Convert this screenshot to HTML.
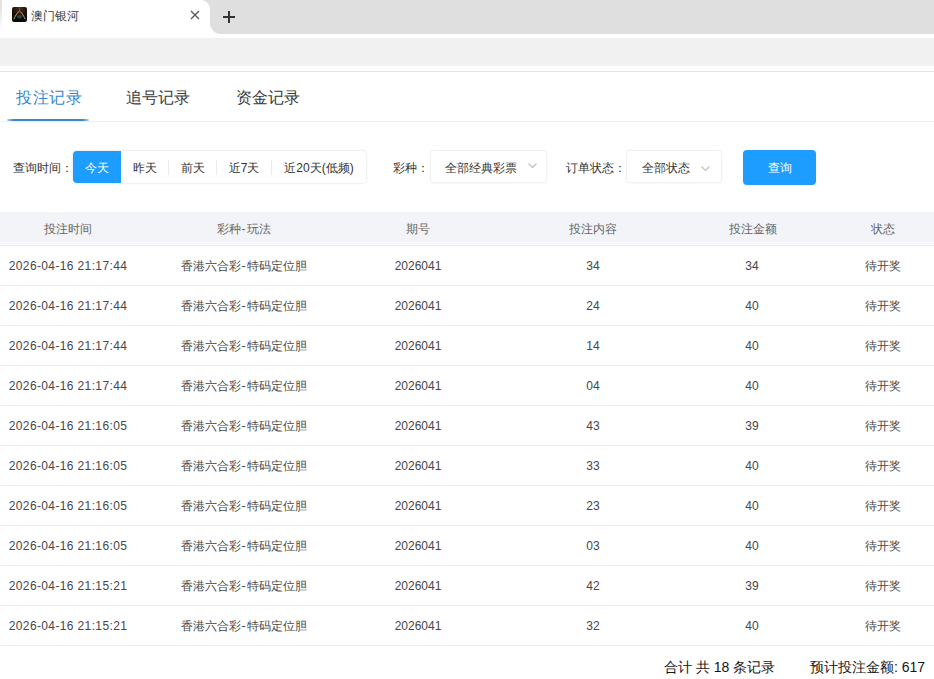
<!DOCTYPE html>
<html><head><meta charset="utf-8">
<style>
*{margin:0;padding:0;box-sizing:border-box}
html,body{width:934px;height:679px;overflow:hidden;background:#fff;font-family:"Liberation Sans",sans-serif;color:#333}
.abs{position:absolute}
#tabbar{position:absolute;left:0;top:0;width:934px;height:34px;background:#dfdfdf}
#tab{position:absolute;left:0;top:0;width:210px;height:38px;background:#fff;border-radius:0 9px 0 0}
#tabl{position:absolute;left:0;top:0;width:2px;height:30px;background:linear-gradient(#e2e2e2,#e8e8e8 40%,#fff)}
#tabcorner{position:absolute;left:210px;top:22px;width:12px;height:16px;background:#fff}
#tabcorner2{position:absolute;left:210px;top:0;width:22px;height:34px;background:#dfdfdf;border-bottom-left-radius:11px}
#favicon{position:absolute;left:11.5px;top:7.3px;width:15px;height:15px}
#tabtitle{position:absolute;left:31px;top:8px;font-size:12px;line-height:16px;color:#3c3c3c}
#toolbar{position:absolute;left:0;top:38px;width:934px;height:28px;background:#f1f1f1}
#tline{position:absolute;left:0;top:71px;width:934px;height:1px;background:#e3e3e3}
.navtab{position:absolute;top:87px;font-size:16px;line-height:22px;color:#3a3a3a}
#navline{position:absolute;left:0;top:121px;width:934px;height:1px;background:#f0f0f0}
#navul{position:absolute;left:6.5px;top:119px;width:82.5px;height:2px;background:linear-gradient(90deg,rgba(58,136,200,0.35),#3a88c8 8%,#3a88c8 92%,rgba(58,136,200,0.35));border-radius:1px}
.lbl{position:absolute;top:160px;font-size:12px;line-height:16px;color:#333}
#grp{position:absolute;left:72px;top:150px;width:295px;height:34px;border:1px solid #f1f1f1;border-radius:5px;box-shadow:0 0 1px 1px rgba(0,0,0,0.02)}
.gb{position:absolute;top:0;height:32px;font-size:12px;line-height:34px;color:#333;text-align:center}
.sep{position:absolute;top:9px;width:1px;height:15px;background:#ebebeb}
#today{left:0;width:48px;background:#1c9dff;color:#fff;border-radius:4px 0 0 4px;top:0;left:0;width:47.5px;height:32px;line-height:34px}
.sel{position:absolute;top:150px;height:33px;border:1px solid #f1f1f1;border-radius:3px;box-shadow:0 0 1px 1px rgba(0,0,0,0.02)}
.seltxt{position:absolute;top:9px;font-size:12px;line-height:16px;color:#333}
.chev{position:absolute;width:9px;height:5px}
#qbtn{position:absolute;left:743px;top:150px;width:73px;height:35px;background:#1c9dff;border-radius:4px;color:#fff;font-size:12px;line-height:36px;text-align:center}
#thead{position:absolute;left:0;top:212px;width:934px;height:34px;background:linear-gradient(#f3f4f7 0,#f3f4f7 30px,#f8f8fb 30px);border-bottom:1px solid #ebebf1}
.th{position:absolute;top:9px;width:200px;text-align:center;font-size:12px;line-height:16px;color:#666}
.row{position:absolute;left:0;width:934px;height:40px;border-bottom:1px solid #efefef}
.td{position:absolute;top:12px;width:240px;text-align:center;font-size:12px;line-height:16px;color:#474747}
.c1{letter-spacing:0.37px}
.c1{left:-52px}.c2{left:123.5px}.c3{left:298px}.c4{left:473px}.c5{left:632px}.c6{left:763px}
.hy{margin:0 1px}
.foot{position:absolute;top:658px;font-size:14px;line-height:18px;color:#151515}
</style></head><body>
<div id="tabbar"></div>
<div id="tabcorner"></div>
<div id="tabcorner2"></div>
<div id="tab"></div><div id="tabl"></div>
<div id="favicon"><svg width="15" height="15" viewBox="0 0 15 15"><defs><radialGradient id="fg" cx="0.5" cy="0.1" r="0.8"><stop offset="0" stop-color="#4a2a14"/><stop offset="0.6" stop-color="#1c120a"/><stop offset="1" stop-color="#0e0a07"/></radialGradient></defs><rect width="15" height="15" rx="2" fill="url(#fg)"/><path d="M7.5 0V3.5" stroke="#7a4526" stroke-width="1.2"/><ellipse cx="7.5" cy="9.8" rx="2.6" ry="1.8" fill="#1f4753"/><path d="M1.8 12.2C3.8 8 6 4.6 7.5 4.2C9 4.6 11.2 8 13.2 12.2" stroke="#bba67c" stroke-width="1" fill="none"/></svg></div>
<div id="tabtitle">澳门银河</div>
<svg class="abs" style="left:190px;top:10px" width="10" height="10" viewBox="0 0 10 10"><path d="M1 1L9 9M9 1L1 9" stroke="#555" stroke-width="1.3"/></svg>
<svg class="abs" style="left:222px;top:10px" width="14" height="14" viewBox="0 0 14 14"><path d="M7 1V13M1 7H13" stroke="#333" stroke-width="2"/></svg>
<div id="toolbar"></div>
<div id="tline"></div>

<div class="navtab" style="left:16px;color:#3587d0;letter-spacing:0.6px">投注记录</div>
<div class="navtab" style="left:126px">追号记录</div>
<div class="navtab" style="left:236px">资金记录</div>
<div id="navline"></div>
<div id="navul"></div>

<div class="lbl" style="left:13px">查询时间：</div>
<div id="grp">
  <div class="gb" id="today">今天</div>
  <div class="gb" style="left:48px;width:47px">昨天</div>
  <div class="sep" style="left:95px"></div>
  <div class="gb" style="left:96px;width:47px">前天</div>
  <div class="sep" style="left:143px"></div>
  <div class="gb" style="left:144px;width:54px">近7天</div>
  <div class="sep" style="left:198px"></div>
  <div class="gb" style="left:199px;width:94px">近20天(低频)</div>
</div>

<div class="lbl" style="left:393px">彩种：</div>
<div class="sel" style="left:430px;width:117px">
  <div class="seltxt" style="left:14px">全部经典彩票</div>
</div>
<svg class="chev" style="left:528px;top:163px" viewBox="0 0 9 5"><path d="M0.5 0.5L4.5 4.5L8.5 0.5" stroke="#c4c4c4" stroke-width="1.3" fill="none"/></svg>

<div class="lbl" style="left:566px">订单状态：</div>
<div class="sel" style="left:626px;width:96px">
  <div class="seltxt" style="left:15px">全部状态</div>
</div>
<svg class="chev" style="left:701px;top:166px" viewBox="0 0 9 5"><path d="M0.5 0.5L4.5 4.5L8.5 0.5" stroke="#c4c4c4" stroke-width="1.3" fill="none"/></svg>

<div id="qbtn">查询</div>

<div id="thead">
  <div class="th" style="left:-32px">投注时间</div>
  <div class="th" style="left:143.5px">彩种<span class="hy">-</span>玩法</div>
  <div class="th" style="left:318px">期号</div>
  <div class="th" style="left:492.5px">投注内容</div>
  <div class="th" style="left:653px">投注金额</div>
  <div class="th" style="left:783px">状态</div>
</div>
<div id="rows">
<div class="row" style="top:246px"><div class="td c1">2026-04-16 21:17:44</div><div class="td c2">香港六合彩<span class="hy">-</span>特码定位胆</div><div class="td c3">2026041</div><div class="td c4">34</div><div class="td c5">34</div><div class="td c6">待开奖</div></div>
<div class="row" style="top:286px"><div class="td c1">2026-04-16 21:17:44</div><div class="td c2">香港六合彩<span class="hy">-</span>特码定位胆</div><div class="td c3">2026041</div><div class="td c4">24</div><div class="td c5">40</div><div class="td c6">待开奖</div></div>
<div class="row" style="top:326px"><div class="td c1">2026-04-16 21:17:44</div><div class="td c2">香港六合彩<span class="hy">-</span>特码定位胆</div><div class="td c3">2026041</div><div class="td c4">14</div><div class="td c5">40</div><div class="td c6">待开奖</div></div>
<div class="row" style="top:366px"><div class="td c1">2026-04-16 21:17:44</div><div class="td c2">香港六合彩<span class="hy">-</span>特码定位胆</div><div class="td c3">2026041</div><div class="td c4">04</div><div class="td c5">40</div><div class="td c6">待开奖</div></div>
<div class="row" style="top:406px"><div class="td c1">2026-04-16 21:16:05</div><div class="td c2">香港六合彩<span class="hy">-</span>特码定位胆</div><div class="td c3">2026041</div><div class="td c4">43</div><div class="td c5">39</div><div class="td c6">待开奖</div></div>
<div class="row" style="top:446px"><div class="td c1">2026-04-16 21:16:05</div><div class="td c2">香港六合彩<span class="hy">-</span>特码定位胆</div><div class="td c3">2026041</div><div class="td c4">33</div><div class="td c5">40</div><div class="td c6">待开奖</div></div>
<div class="row" style="top:486px"><div class="td c1">2026-04-16 21:16:05</div><div class="td c2">香港六合彩<span class="hy">-</span>特码定位胆</div><div class="td c3">2026041</div><div class="td c4">23</div><div class="td c5">40</div><div class="td c6">待开奖</div></div>
<div class="row" style="top:526px"><div class="td c1">2026-04-16 21:16:05</div><div class="td c2">香港六合彩<span class="hy">-</span>特码定位胆</div><div class="td c3">2026041</div><div class="td c4">03</div><div class="td c5">40</div><div class="td c6">待开奖</div></div>
<div class="row" style="top:566px"><div class="td c1">2026-04-16 21:15:21</div><div class="td c2">香港六合彩<span class="hy">-</span>特码定位胆</div><div class="td c3">2026041</div><div class="td c4">42</div><div class="td c5">39</div><div class="td c6">待开奖</div></div>
<div class="row" style="top:606px"><div class="td c1">2026-04-16 21:15:21</div><div class="td c2">香港六合彩<span class="hy">-</span>特码定位胆</div><div class="td c3">2026041</div><div class="td c4">32</div><div class="td c5">40</div><div class="td c6">待开奖</div></div>
</div>

<div class="foot" style="left:664px">合计 共 18 条记录</div>
<div class="foot" style="left:810px">预计投注金额: 617</div>

</body></html>
